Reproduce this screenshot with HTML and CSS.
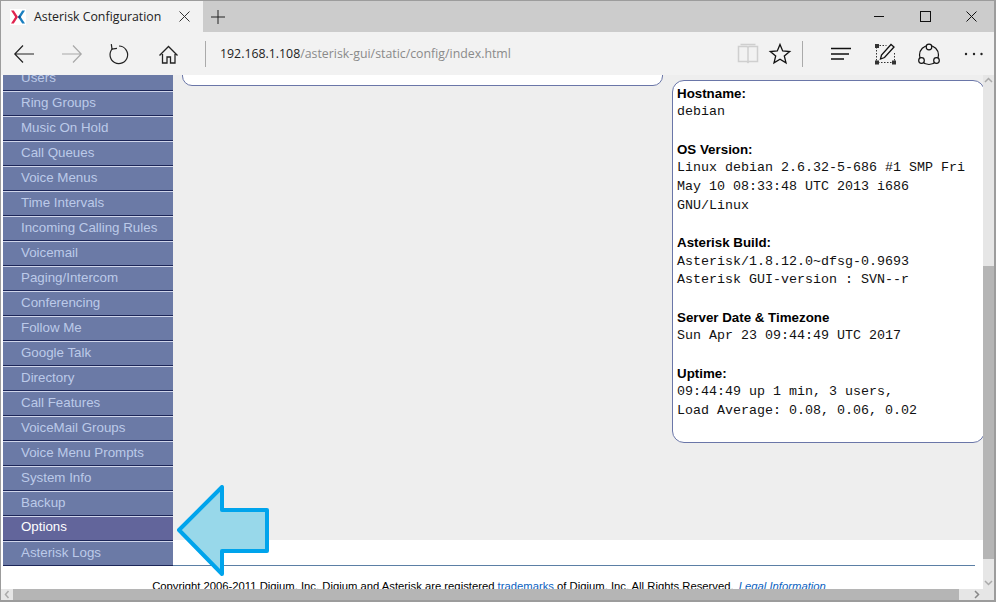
FILE: index.html
```html
<!DOCTYPE html>
<html lang="en">
<head>
<meta charset="utf-8">
<title>Asterisk Configuration</title>
<link rel="stylesheet" href="styles.css">
</head>
<body>
<div class="window">
  <header class="tabstrip">
    <div class="tab">
      <svg class="favicon" width="16" height="16" viewBox="0 0 16 16"><rect width="16" height="16" fill="#fff"/><path d="M1 1.500h2.800L8 8l-4.200 6.500H1L5.200 8z" fill="#e0234e"/><path d="M15 1.500h-2.800L8 8l4.200 6.500H15L10.800 8z" fill="#1a7fc0"/><path d="M6.800 6.200L8 8 6.800 9.800 8 8z" fill="#1c2c5c"/><path d="M8 8l1.200-1.800L10.800 8 9.200 9.800z" fill="#1c3c74"/></svg>
      <span class="tab-title">Asterisk Configuration</span>
      <svg class="tab-close" width="11" height="11" viewBox="0 0 11 11"><path d="M.5.5l10 10M10.500.5l-10 10" stroke="#333" fill="none"/></svg>
    </div>
    <svg class="new-tab" width="14" height="14" viewBox="0 0 14 14"><path d="M7 0v14M0 7h14" stroke="#222" fill="none"/></svg>
    <div class="win-controls">
      <svg width="46" height="31" viewBox="0 0 46 31"><path d="M18 15.500h10" stroke="#111" fill="none"/></svg>
      <svg width="46" height="31" viewBox="0 0 46 31"><rect x="18.500" y="10.500" width="10" height="10" stroke="#111" fill="none"/></svg>
      <svg width="46" height="31" viewBox="0 0 46 31"><path d="M18.500 10.500l10 10M28.500 10.500l-10 10" stroke="#111" fill="none"/></svg>
    </div>
  </header>
  <div class="toolbar">
    <svg width="47" height="43" viewBox="0 0 47 43"><path d="M14 22h19M22 13.500L13.800 22l8.200 8.500" stroke="#222" stroke-width="1.200" fill="none"/></svg>
    <svg width="47" height="43" viewBox="0 0 47 43"><path d="M14 22h19M25 13.500l8.200 8.500-8.200 8.500" stroke="#a8a8a8" stroke-width="1.200" fill="none"/></svg>
    <svg width="47" height="43" viewBox="0 0 47 43"><path d="M24 14a8.800 8.800 0 1 1-6.500 2.700" stroke="#222" stroke-width="1.200" fill="none"/><path d="M17 12v5h5" stroke="#222" stroke-width="1.200" fill="none" transform="rotate(-8 17 17)"/></svg>
    <svg width="47" height="43" viewBox="0 0 47 43"><path d="M17.500 23.500L26.500 14.500l9 9M20.500 22v9h4.500v-6h3.500v6h4.500v-9" stroke="#222" stroke-width="1.300" fill="none"/></svg>
    <div class="vsep sep-left"></div>
    <div class="address"><span class="host">192.168.1.108</span><span class="path">/asterisk-gui/static/config/index.html</span></div>
    <svg width="40" height="43" viewBox="0 0 40 43"><path d="M10.500 14.500h8.500l1 1 1-1h8.500v15h-8.500l-1 1-1-1h-8.500zM20 15.500v14M12.500 12.500h15" stroke="#cfcfcf" stroke-width="1.500" fill="none"/></svg>
    <svg width="24" height="43" viewBox="0 0 24 43"><path d="M12 12.500l2.700 6.500 7 .5-5.400 4.500 1.700 6.900-6-3.700-6 3.700 1.700-6.900-5.400-4.500 7-.5z" stroke="#111" stroke-width="1.300" fill="none"/></svg>
    <div class="vsep sep-right"></div>
    <svg width="46" height="43" viewBox="0 0 46 43"><path d="M13 16.500h20M13 22h18M13 27h13" stroke="#111" stroke-width="1.300" fill="none"/></svg>
    <svg width="42" height="43" viewBox="0 0 42 43"><path d="M12.500 13.500h10M12.500 15v14M14 30.500h15M30.500 21v8" stroke="#333" stroke-dasharray="1.500 1.500" fill="none"/><path d="M11 12h4v4h-4zM11 28.500h4v4h-4zM28 28.500h4v4h-4z" fill="#333"/><path d="M16.500 27l1-4L27 12.500l3 2.500-9.500 10.500z" stroke="#111" stroke-width="1.300" fill="none"/></svg>
    <svg width="46" height="43" viewBox="0 0 46 43"><circle cx="23" cy="23" r="9.500" stroke="#111" stroke-width="1.200" fill="none"/><circle cx="23" cy="15" r="2.800" stroke="#111" stroke-width="1.200" fill="#f2f2f2"/><circle cx="15.500" cy="28.500" r="2.800" stroke="#111" stroke-width="1.200" fill="#f2f2f2"/><circle cx="30.500" cy="28.500" r="2.800" stroke="#111" stroke-width="1.200" fill="#f2f2f2"/></svg>
    <svg width="42" height="43" viewBox="0 0 42 43"><circle cx="14" cy="22" r="1.200" fill="#222"/><circle cx="22" cy="22" r="1.200" fill="#222"/><circle cx="29.500" cy="22" r="1.200" fill="#222"/></svg>
  </div>
  <div class="viewport">
    <div class="page">
      <div class="layout">
        <nav class="sidebar">
          <a class="item">Users</a>
          <a class="item">Ring Groups</a>
          <a class="item">Music On Hold</a>
          <a class="item">Call Queues</a>
          <a class="item">Voice Menus</a>
          <a class="item">Time Intervals</a>
          <a class="item">Incoming Calling Rules</a>
          <a class="item">Voicemail</a>
          <a class="item">Paging/Intercom</a>
          <a class="item">Conferencing</a>
          <a class="item">Follow Me</a>
          <a class="item">Google Talk</a>
          <a class="item">Directory</a>
          <a class="item">Call Features</a>
          <a class="item">VoiceMail Groups</a>
          <a class="item">Voice Menu Prompts</a>
          <a class="item">System Info</a>
          <a class="item">Backup</a>
          <a class="item active">Options</a>
          <a class="item">Asterisk Logs</a>
        </nav>
        <main class="main">
          <div class="panel-left"></div>
          <section class="panel-right">
            <h4>Hostname:</h4>
            <p>debian</p>
            <br>
            <h4>OS Version:</h4>
            <p>Linux debian 2.6.32-5-686 #1 SMP Fri May 10 08:33:48 UTC 2013 i686 GNU/Linux</p>
            <br>
            <h4>Asterisk Build:</h4>
            <p>Asterisk/1.8.12.0~dfsg-0.9693<br>Asterisk GUI-version : SVN--r</p>
            <br>
            <h4>Server Date &amp; Timezone</h4>
            <p>Sun Apr 23 09:44:49 UTC 2017</p>
            <br>
            <h4>Uptime:</h4>
            <p>09:44:49 up 1 min, 3 users,<br>Load Average: 0.08, 0.06, 0.02</p>
          </section>
        </main>
      </div>
      <footer class="footer">Copyright 2006-2011 Digium, Inc. Digium and Asterisk are registered <a class="link">trademarks</a> of Digium, Inc. All Rights Reserved. <a class="link legal">Legal Information</a></footer>
      <svg class="callout" width="100" height="100" viewBox="0 0 100 100"><path d="M3 45L46 2v23h45v41H46v23z" fill="#98d8ea" stroke="#00a4ec" stroke-width="4" stroke-linejoin="round"/></svg>
    </div>
    <div class="vscroll">
      <div class="v-btn"><svg width="11" height="11" viewBox="0 0 11 11"><path d="M2 7l3.500-3.500L9 7" stroke="#aaa" stroke-width="1.500" fill="none"/></svg></div>
      <div class="v-thumb"></div>
      <div class="v-end"><svg width="11" height="11" viewBox="0 0 11 11"><path d="M2 4l3.500 3.500L9 4" stroke="#aaa" stroke-width="1.500" fill="none"/></svg></div>
    </div>
  </div>
  <div class="hscroll">
    <div class="h-btn"><svg width="12" height="11" viewBox="0 0 12 11"><path d="M7.500 2L4.500 5.500l3 3.500" stroke="#aaa" stroke-width="1.500" fill="none"/></svg></div>
    <div class="h-thumb"></div>
    <div class="h-end"><svg width="25" height="11" viewBox="0 0 25 11"><path d="M16 2l3.500 3.500L16 9" stroke="#888" stroke-width="1.500" fill="none"/></svg></div>
  </div>
</div>
</body>
</html>
```
FILE: styles.css
```css
html, body { margin: 0; padding: 0; }
body { width: 996px; height: 602px; overflow: hidden; font-family: "Liberation Sans", Arial, sans-serif; }
svg { display: block; flex: none; }

.window {
  box-sizing: border-box; width: 996px; height: 602px;
  display: flex; flex-direction: column; overflow: hidden;
  border-style: solid; border-color: #9c9c9c; border-width: 1px 2px 2px 1px;
}

.tabstrip { height: 31px; flex: none; display: flex; align-items: center; background: #cccccc; }
.tab { width: 202px; height: 31px; box-sizing: border-box; flex: none; display: flex; align-items: center; padding-left: 9px; background: #f2f2f2; }
.tab-title { margin-left: 8px; width: 147px; font: 12.330px "Open Sans", sans-serif; color: #222; white-space: nowrap; }
.tab-close { margin-left: -2px; }
.new-tab { margin-left: 8px; }
.win-controls { margin-left: auto; display: flex; }

.toolbar { height: 43px; flex: none; display: flex; align-items: center; background: #f2f2f2; }
.vsep { width: 1px; height: 26px; background: #aaaaaa; flex: none; }
.sep-left { margin-left: 16px; }
.sep-right { margin: 0 15px 0 10px; }
.address { flex: 1; margin-left: 14px; font: 12.330px "Open Sans", sans-serif; white-space: nowrap; }
.host { color: #222; }
.path { color: #8a8a8a; }

.viewport { flex: 1; min-height: 0; display: flex; }
.page { position: relative; flex: 1; min-width: 0; overflow: hidden; background: #fff; padding-left: 2px; }
.layout { display: flex; align-items: flex-start; width: 980px; }

.sidebar { width: 170px; flex: none; display: flex; flex-direction: column; position: relative; z-index: 1; overflow: hidden; }
.item {
  box-sizing: border-box; flex: none; height: 25px; padding-left: 18px;
  font-size: 13.330px; line-height: 22px; color: #bccae9;
  background: #6b7aa6; border-top: 1px solid #cfd5ea; border-bottom: 1px solid #1c2658;
}
.item:first-child { margin-top: -9px; }
.item.active { background: #62659b; color: #fff; line-height: 20px; }

.main { flex: none; width: 810px; height: 465px; display: flex; align-items: flex-start; background: #eeeeee; overflow: hidden; }
.panel-left { flex: none; box-sizing: border-box; width: 481px; height: 31px; margin: -20px 0 0 9px; background: #fff; border: 1px solid #6a76a8; border-radius: 10px; }
.panel-right {
  flex: none; box-sizing: border-box; width: 313px; height: 363px; margin: 5px 0 0 9px; padding: 3.750px 4px;
  background: #fff; border: 1px solid #6a76a8; border-radius: 12px;
  font: 13.330px/18.660px "Liberation Mono", monospace; color: #111;
}
.panel-right h4 { margin: 0; font: bold 13.330px/18.660px "Liberation Sans", Arial, sans-serif; color: #000; }
.panel-right p { margin: 0; width: 296px; }

.footer {
  position: relative; box-sizing: border-box; width: 972px; margin-top: -1px; padding-top: 14px;
  border-top: 1px solid #5b7fa5; text-align: center; font-size: 11.270px; line-height: 13px; color: #000; white-space: nowrap;
}
.link { color: #0b5fc0; }
.legal { font-style: italic; margin-left: 2px; }

.callout { position: absolute; left: 175px; top: 410px; z-index: 2; }

.vscroll { width: 11px; flex: none; display: flex; flex-direction: column; background: #e6e6e6; }
.v-btn { height: 191px; flex: none; }
.v-thumb { height: 293px; flex: none; background: #b5b5b5; }
.v-end { flex: 1; display: flex; align-items: flex-end; padding-bottom: 1px; }

.hscroll { height: 11px; flex: none; display: flex; background: #b5b5b5; }
.h-btn { width: 12px; flex: none; background: #e6e6e6; }
.h-thumb { width: 946px; flex: none; }
.h-end { flex: 1; background: #e6e6e6; }
```
